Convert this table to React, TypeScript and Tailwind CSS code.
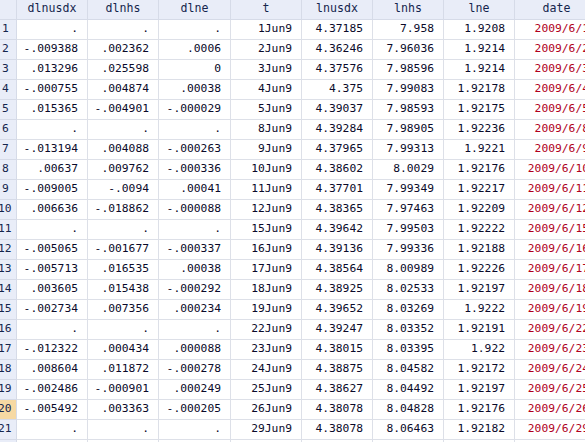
const cols = ["dlnusdx", "dlnhs", "dlne", "t", "lnusdx", "lnhs", "lne", "date"];

const rows: string[][] = [
  [".", ".", ".", "1Jun9", "4.37185", "7.958", "1.9208", "2009/6/1"],
  ["-.009388", ".002362", ".0006", "2Jun9", "4.36246", "7.96036", "1.9214", "2009/6/2"],
  [".013296", ".025598", "0", "3Jun9", "4.37576", "7.98596", "1.9214", "2009/6/3"],
  ["-.000755", ".004874", ".00038", "4Jun9", "4.375", "7.99083", "1.92178", "2009/6/4"],
  [".015365", "-.004901", "-.000029", "5Jun9", "4.39037", "7.98593", "1.92175", "2009/6/5"],
  [".", ".", ".", "8Jun9", "4.39284", "7.98905", "1.92236", "2009/6/8"],
  ["-.013194", ".004088", "-.000263", "9Jun9", "4.37965", "7.99313", "1.9221", "2009/6/9"],
  [".00637", ".009762", "-.000336", "10Jun9", "4.38602", "8.0029", "1.92176", "2009/6/10"],
  ["-.009005", "-.0094", ".00041", "11Jun9", "4.37701", "7.99349", "1.92217", "2009/6/11"],
  [".006636", "-.018862", "-.000088", "12Jun9", "4.38365", "7.97463", "1.92209", "2009/6/12"],
  [".", ".", ".", "15Jun9", "4.39642", "7.99503", "1.92222", "2009/6/15"],
  ["-.005065", "-.001677", "-.000337", "16Jun9", "4.39136", "7.99336", "1.92188", "2009/6/16"],
  ["-.005713", ".016535", ".00038", "17Jun9", "4.38564", "8.00989", "1.92226", "2009/6/17"],
  [".003605", ".015438", "-.000292", "18Jun9", "4.38925", "8.02533", "1.92197", "2009/6/18"],
  ["-.002734", ".007356", ".000234", "19Jun9", "4.39652", "8.03269", "1.9222", "2009/6/19"],
  [".", ".", ".", "22Jun9", "4.39247", "8.03352", "1.92191", "2009/6/22"],
  ["-.012322", ".000434", ".000088", "23Jun9", "4.38015", "8.03395", "1.922", "2009/6/23"],
  [".008604", ".011872", "-.000278", "24Jun9", "4.38875", "8.04582", "1.92172", "2009/6/24"],
  ["-.002486", "-.000901", ".000249", "25Jun9", "4.38627", "8.04492", "1.92197", "2009/6/25"],
  ["-.005492", ".003363", "-.000205", "26Jun9", "4.38078", "8.04828", "1.92176", "2009/6/26"],
  [".", ".", ".", "29Jun9", "4.38078", "8.06463", "1.92182", "2009/6/29"],
  ["", "", "", "", "", "", "", ""],
];

const grid = "grid grid-cols-[17px_71px_71px_72px_71px_71px_71px_71px_84px]";

export default function App() {
  return (
    <main className="h-[442px] w-[585px] overflow-hidden bg-white font-['DejaVu_Sans_Mono',monospace] text-[11.3px] text-[#0a0a2a]">
      <div className="w-[600px]">
        {/* header */}
        <div className={`${grid} h-5 bg-[#e9edf8]`}>
          <div className="border-b border-r border-[#d6dbe8]" />
          {cols.map((c) => (
            <div
              key={c}
              className="flex items-center justify-center border-b border-r border-[#d6dbe8] pb-px text-[11.6px] text-[#15254d]"
            >
              {c}
            </div>
          ))}
        </div>

        {rows.map((r, i) => {
          const n = i + 1;
          const sel = n === 20;
          return (
            <div key={n} className={`${grid} h-5`}>
              <div
                className={`flex items-center overflow-hidden border-b border-r border-[#d6dbe8] pb-px text-[#15254d] ${
                  sel ? "bg-[#f6d9a3]" : "bg-[#e9edf8]"
                }`}
              >
                <span className={n < 10 ? "pl-[2px]" : "ml-[-2px]"}>{n}</span>
              </div>
              {r.map((v, j) => (
                <div
                  key={j}
                  className={`flex items-center justify-end whitespace-nowrap border-b border-r border-[#dde0e8] pb-px pr-[9px] ${
                    j === 7 ? "text-[#b0001c]" : ""
                  }`}
                >
                  {v}
                </div>
              ))}
            </div>
          );
        })}
      </div>
    </main>
  );
}
